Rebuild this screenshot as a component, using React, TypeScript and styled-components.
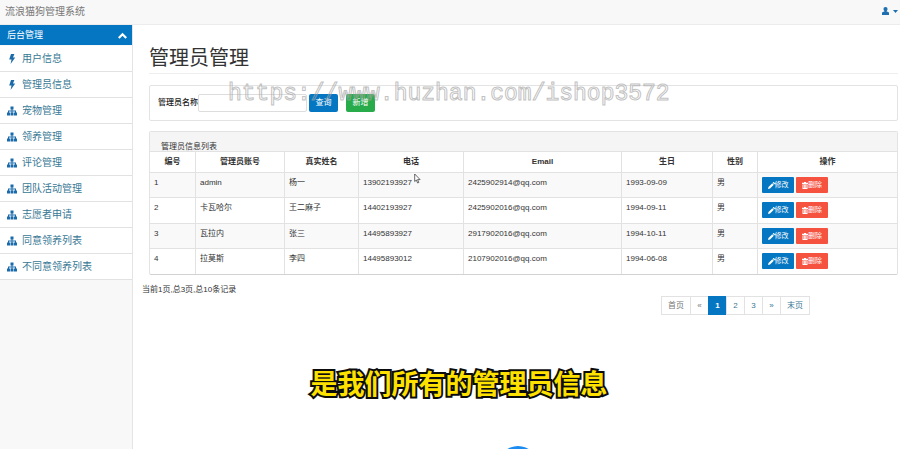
import React from "react";
import styled, { createGlobalStyle, css } from "styled-components";

const GlobalStyle = createGlobalStyle`
  *, *::before, *::after { box-sizing: border-box; }
  body {
    margin: 0;
    background: #fff;
    color: #333;
    font-family: "Liberation Sans", "Noto Sans CJK SC", sans-serif;
    font-size: 8px;
    line-height: 12px;
  }
  button, input { font-family: inherit; font-size: inherit; line-height: inherit; }
`;

const Page = styled.div`
  position: relative;
  display: flex;
  flex-direction: column;
  min-height: 100vh;
  overflow: hidden;
`;

const TopBar = styled.header`
  display: flex;
  align-items: center;
  justify-content: space-between;
  height: 25px;
  padding: 0 2px 0 5px;
  background: #f8f8f8;
  border-bottom: 1px solid #ececec;
`;

const Brand = styled.a`
  color: #777;
  font-size: 10px;
  text-decoration: none;
`;

const UserButton = styled.button`
  display: flex;
  align-items: center;
  gap: 4px;
  padding: 0 0 2px;
  border: 0;
  background: none;
  color: #1f6fb0;
`;

const Body = styled.div`
  display: flex;
  flex: 1;
`;

const Sidebar = styled.nav`
  flex: 0 0 133px;
  background: #f8f8f8;
  border-right: 1px solid #e4e4e4;
`;

const MenuHeader = styled.button`
  display: flex;
  align-items: center;
  justify-content: space-between;
  width: 100%;
  height: 20px;
  padding: 0 5px 0 7px;
  border: 0;
  background: #0577c2;
  color: #fff;
  font-size: 9px;
`;

const MenuList = styled.ul`
  margin: 0;
  padding: 1px 0 0;
  list-style: none;
`;

const MenuLink = styled.a`
  display: flex;
  align-items: center;
  gap: 5px;
  height: 26px;
  padding-left: 7px;
  background: #fff;
  border-bottom: 1px solid #e2e2e2;
  color: #387894;
  font-size: 10px;
  text-decoration: none;

  svg { flex: 0 0 10px; color: #1b6bab; }
`;

const Main = styled.main`
  flex: 1;
  min-width: 0;
  padding: 22px 2px 0 16px;
`;

const Title = styled.h1`
  margin: 0 0 11px;
  padding-bottom: 3px;
  border-bottom: 1px solid #eee;
  font-size: 20px;
  font-weight: 400;
  line-height: 23px;
`;

const panel = css`
  border: 1px solid #e3e3e3;
  border-radius: 2px;
  background: #fff;
`;

const SearchPanel = styled.form`
  ${panel}
  display: flex;
  align-items: center;
  height: 36px;
  padding: 0 8px;
`;

const SearchLabel = styled.label`
  color: #222;
  font-weight: 500;
`;

const SearchInput = styled.input`
  width: 109px;
  height: 18px;
  margin: 0 2px 0 0;
  padding: 0 4px;
  border: 1px solid #ddd;
  border-radius: 2px;
`;

const tones = { blue: "#0577c2", green: "#28ab4b", red: "#f5533f" };

const FormButton = styled.button<{ $tone: keyof typeof tones }>`
  width: 29px;
  height: 18px;
  margin-right: 8px;
  padding: 0;
  border: 0;
  border-radius: 2px;
  background: ${(p) => tones[p.$tone]};
  color: #fff;
`;

const TablePanel = styled.section`
  ${panel}
  margin-top: 10px;
  border-bottom-color: #d2d2d2;
`;

const PanelHeading = styled.h2`
  display: flex;
  align-items: flex-end;
  height: 20px;
  margin: 0;
  padding-left: 11px;
  overflow: hidden;
  background: #f5f5f5;
  border-bottom: 1px solid #e2e2e2;
  font-size: 8px;
  font-weight: 400;
  line-height: 8px;
`;

const Table = styled.table`
  width: 100%;
  table-layout: fixed;
  border-collapse: separate;
  border-spacing: 0;

  th, td {
    border-right: 1px solid #e2e2e2;
    border-bottom: 1px solid #e2e2e2;
  }
  th:last-child, td:last-child { border-right: 0; }
  tbody tr:last-child td { height: 25px; border-bottom: 0; }
  tbody tr:nth-child(odd) { background: #f9f9f9; }
  tbody tr:nth-child(odd) td { height: 25px; }
`;

const Column = styled.col<{ $width: number }>`
  width: ${(p) => p.$width}px;
`;

const HeadCell = styled.th`
  height: 21px;
  padding: 0;
  font-weight: 700;
`;

const Cell = styled.td`
  height: 26px;
  padding: 4px 4px 0;
  vertical-align: top;
`;

const Actions = styled.div`
  display: flex;
  gap: 2px;
`;

const ActionButton = styled.button<{ $tone: keyof typeof tones }>`
  display: flex;
  align-items: center;
  justify-content: center;
  width: 32px;
  height: 16px;
  padding: 0;
  border: 0;
  border-radius: 1px;
  background: ${(p) => tones[p.$tone]};
  color: #fff;
  font-size: 7px;
`;

const Summary = styled.p`
  margin: 9px 0 0 -7px;
`;

const Pagination = styled.ul`
  display: flex;
  justify-content: flex-end;
  margin: 0;
  padding: 0 88px 0 0;
  list-style: none;
`;

const PageLink = styled.a<{ $active?: boolean; $muted?: boolean }>`
  display: block;
  min-width: 19px;
  height: 19px;
  margin-left: -1px;
  padding: 0 6px;
  border: 1px solid #e2e2e2;
  background: #fff;
  color: ${(p) => (p.$muted ? "#777" : "#387894")};
  line-height: 17px;
  text-align: center;
  text-decoration: none;
  ${(p) =>
    p.$active &&
    css`
      background: #0577c2;
      border-color: #0577c2;
      color: #fff;
      font-weight: 700;
    `}
`;

const Watermark = styled.div`
  position: absolute;
  top: 78px;
  left: 228px;
  color: transparent;
  font-family: "Liberation Mono", monospace;
  font-size: 23px;
  line-height: 32px;
  white-space: nowrap;
  pointer-events: none;
  -webkit-text-stroke: 1px rgba(165, 165, 165, 0.7);
`;

const Caption = styled.div`
  position: absolute;
  top: 363px;
  left: 18px;
  right: 0;
  color: #ffe100;
  font-family: "Noto Sans CJK SC", sans-serif;
  font-size: 27px;
  font-weight: 700;
  line-height: 40px;
  text-align: center;
  pointer-events: none;
  -webkit-text-stroke: 4px #0c0c0c;
  paint-order: stroke fill;
`;

const Bubble = styled.div`
  position: absolute;
  bottom: -37px;
  left: 498px;
  width: 40px;
  height: 40px;
  border-radius: 50%;
  background: #1c8cf0;
`;

const Pointer = styled.svg`
  position: absolute;
  top: 173px;
  left: 414px;
`;

const BoltIcon = () => (
  <svg width="10" height="10" viewBox="0 0 10 10" fill="currentColor" aria-hidden="true">
    <path d="M4 0h3.400L6 3.400h2.200L3.600 10l.9-4.400H2.200z" />
  </svg>
);

const SitemapIcon = () => (
  <svg width="10" height="10" viewBox="0 0 10 10" fill="currentColor" aria-hidden="true">
    <path d="M3.500.5h3v3h-1v1H9v2h1v3H7v-3h1v-1H5.500v1h1v3h-3v-3h1v-1H2v1h1v3H0v-3h1v-2h3.500v-1h-1z" />
  </svg>
);

const UserIcon = () => (
  <svg width="7" height="8" viewBox="0 0 7 8" fill="currentColor" aria-hidden="true">
    <path d="M3.500 0C4.900 0 5.500.9 5.500 2c0 .9-.4 1.700-.9 2.100v.3l1.700.7c.5.2.7.6.7 1V8H0V6.100c0-.4.2-.8.7-1l1.700-.7v-.3c-.5-.4-.9-1.200-.9-2.100C1.500.9 2.100 0 3.500 0z" />
  </svg>
);

const CaretIcon = () => (
  <svg width="5" height="3" viewBox="0 0 5 3" fill="currentColor" aria-hidden="true">
    <path d="M0 0h5L2.500 3z" />
  </svg>
);

const ChevronIcon = () => (
  <svg width="9" height="7" viewBox="0 0 9 7" fill="none" stroke="currentColor" strokeWidth="2.200" aria-hidden="true">
    <path d="M.8 6l3.700-3.700L8.200 6" />
  </svg>
);

const PencilIcon = () => (
  <svg width="7" height="7" viewBox="0 0 7 7" fill="currentColor" aria-hidden="true">
    <path d="M0 7l.5-2L4.300 1.200l1.500 1.500L2 6.500zM4.700.8l.6-.6c.3-.3.600-.2.800 0l.7.7c.2.2.3.5 0 .8l-.6.6z" />
  </svg>
);

const TrashIcon = () => (
  <svg width="6" height="7" viewBox="0 0 6 7" fill="currentColor" aria-hidden="true">
    <path fillRule="evenodd" d="M2 0h2v.8h2V2H0V.8h2zM.5 2.400h5V7h-5zM1.500 3v3h.5V3zM2.800 3v3h.5V3zM4 3v3h.5V3z" />
  </svg>
);

const menu = [
  { label: "用户信息", Icon: BoltIcon },
  { label: "管理员信息", Icon: BoltIcon },
  { label: "宠物管理", Icon: SitemapIcon },
  { label: "领养管理", Icon: SitemapIcon },
  { label: "评论管理", Icon: SitemapIcon },
  { label: "团队活动管理", Icon: SitemapIcon },
  { label: "志愿者申请", Icon: SitemapIcon },
  { label: "同意领养列表", Icon: SitemapIcon },
  { label: "不同意领养列表", Icon: SitemapIcon },
];

const columns = [
  { label: "编号", width: 46 },
  { label: "管理员账号", width: 89 },
  { label: "真实姓名", width: 74 },
  { label: "电话", width: 105 },
  { label: "Email", width: 158 },
  { label: "生日", width: 91 },
  { label: "性别", width: 45 },
  { label: "操作", width: 139 },
];

const admins = [
  ["1", "admin", "杨一", "13902193927", "2425902914@qq.com", "1993-09-09", "男"],
  ["2", "卡瓦哈尔", "王二麻子", "14402193927", "2425902016@qq.com", "1994-09-11", "男"],
  ["3", "瓦拉内", "张三", "14495893927", "2917902016@qq.com", "1994-10-11", "男"],
  ["4", "拉莫斯", "李四", "14495893012", "2107902016@qq.com", "1994-06-08", "男"],
];

const pages = [
  { label: "首页", muted: true },
  { label: "«", muted: true },
  { label: "1", active: true },
  { label: "2" },
  { label: "3" },
  { label: "»" },
  { label: "末页" },
];

export default function App() {
  return (
    <Page lang="zh-CN">
      <GlobalStyle />
      <TopBar>
        <Brand href="#">流浪猫狗管理系统</Brand>
        <UserButton type="button" aria-label="用户">
          <UserIcon />
          <CaretIcon />
        </UserButton>
      </TopBar>
      <Body>
        <Sidebar>
          <MenuHeader type="button" aria-expanded="true">
            后台管理
            <ChevronIcon />
          </MenuHeader>
          <MenuList>
            {menu.map(({ label, Icon }) => (
              <li key={label}>
                <MenuLink href="#">
                  <Icon />
                  {label}
                </MenuLink>
              </li>
            ))}
          </MenuList>
        </Sidebar>
        <Main>
          <Title>管理员管理</Title>
          <SearchPanel onSubmit={(e) => e.preventDefault()}>
            <SearchLabel htmlFor="admin-name">管理员名称</SearchLabel>
            <SearchInput id="admin-name" type="text" />
            <FormButton type="submit" $tone="blue">查询</FormButton>
            <FormButton type="button" $tone="green">新增</FormButton>
          </SearchPanel>
          <TablePanel>
            <PanelHeading>管理员信息列表</PanelHeading>
            <Table>
              <colgroup>
                {columns.map((c) => (
                  <Column key={c.label} $width={c.width} />
                ))}
              </colgroup>
              <thead>
                <tr>
                  {columns.map((c) => (
                    <HeadCell key={c.label} scope="col">{c.label}</HeadCell>
                  ))}
                </tr>
              </thead>
              <tbody>
                {admins.map((row) => (
                  <tr key={row[0]}>
                    {row.map((value, i) => (
                      <Cell key={i}>{value}</Cell>
                    ))}
                    <Cell>
                      <Actions>
                        <ActionButton type="button" $tone="blue">
                          <PencilIcon />
                          修改
                        </ActionButton>
                        <ActionButton type="button" $tone="red">
                          <TrashIcon />
                          删除
                        </ActionButton>
                      </Actions>
                    </Cell>
                  </tr>
                ))}
              </tbody>
            </Table>
          </TablePanel>
          <Summary>当前1页,总3页,总10条记录</Summary>
          <Pagination>
            {pages.map((p) => (
              <li key={p.label}>
                <PageLink href="#" $active={p.active} $muted={p.muted}>{p.label}</PageLink>
              </li>
            ))}
          </Pagination>
        </Main>
      </Body>
      <Watermark>https://www.huzhan.com/ishop3572</Watermark>
      <Pointer width="7" height="11" viewBox="0 0 7 11" fill="#fff" stroke="#444" strokeWidth="0.800" aria-hidden="true">
        <path d="M.7 1v7.500l1.700-1.500 1.200 3 1.200-.5-1.200-2.900h2.500z" />
      </Pointer>
      <Caption>是我们所有的管理员信息</Caption>
      <Bubble />
    </Page>
  );
}
